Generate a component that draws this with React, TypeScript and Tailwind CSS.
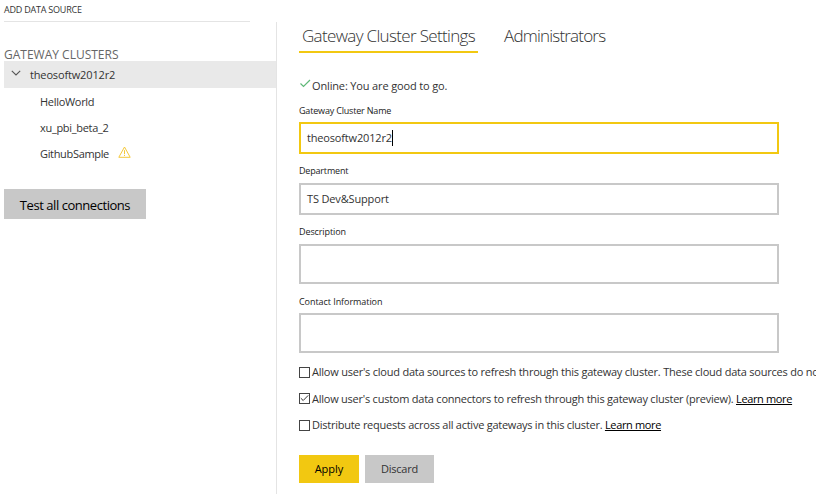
import React from "react";

function Checkbox({ checked = false }: { checked?: boolean }) {
  return (
    <span className="mr-[2px] flex h-[11px] w-[11px] shrink-0 items-center justify-center border border-[#444] bg-white">
      {checked && (
        <svg width="9" height="8" viewBox="0 0 9 8" fill="none" stroke="#333" strokeWidth="1">
          <path d="M0.8 4.2 L3.2 6.5 L8.2 1.4" />
        </svg>
      )}
    </span>
  );
}

function Label({ className, children }: { className: string; children: React.ReactNode }) {
  return (
    <div className="flex h-3 items-center text-[9px] text-[#222]">
      <span className={className}>{children}</span>
    </div>
  );
}

export default function App() {
  return (
    <div className="flex h-[494px] w-[816px] overflow-hidden bg-white font-['Open_Sans','Noto_Sans',sans-serif] text-[11px] whitespace-nowrap text-[#333]">
      <aside className="flex w-[276px] shrink-0 flex-col pl-1">
        <div className="flex h-[21px] w-[246px] items-center pb-px text-[9px]">
          <span className="tracking-[-0.22px]">ADD DATA SOURCE</span>
        </div>
        <div className="h-px w-[246px] bg-[#e4e4e4]" />
        <div className="mt-6 flex h-[15px] items-center pt-[2px] text-[12px] text-[#666]">
          <span>GATEWAY CLUSTERS</span>
        </div>
        <div className="flex h-[27px] items-center bg-[#e9e9e9] pl-[7px]">
          <svg className="mr-[9px] -mt-[3px]" width="10" height="6" viewBox="0 0 10 6" fill="none" stroke="#555" strokeWidth="1.1">
            <path d="M0.8 0.8 L5 5 L9.2 0.8" />
          </svg>
          <span className="pt-px tracking-[-0.15px]">theosoftw2012r2</span>
        </div>
        <div className="flex h-[26px] items-center pt-[2px] pl-9"><span className="tracking-[-0.3px]">HelloWorld</span></div>
        <div className="flex h-[27px] items-center pt-px pl-9"><span className="tracking-[-0.3px]">xu_pbi_beta_2</span></div>
        <div className="flex h-[26px] items-center pt-px pl-9">
          <span className="w-[78px] tracking-[-0.33px]">GithubSample</span>
          <svg className="-mt-[5px]" width="13" height="12" viewBox="0 0 13 12" fill="none" stroke="#f4c83c" strokeWidth="1">
            <path d="M6.5 1 L12.2 11.3 H0.8 Z M6.5 4.2 V8.2 M6.5 9 V10" />
          </svg>
        </div>
        <button className="mt-[22px] flex h-[30px] w-[142px] items-center justify-center bg-[#c8c8c8] pt-[3px] text-[13px] text-black">
          <span className="tracking-[-0.45px]">Test all connections</span>
        </button>
      </aside>

      <main className="mt-[22px] flex w-[540px] flex-col border-l border-[#e4e4e4] pl-[22px]">
        <nav className="flex h-[31px] text-[17px] font-light text-[#333]">
          <div className="flex w-[179px] justify-center border-b-2 border-[#f2c811]">
            <span className="leading-[27px] tracking-[-0.66px]">Gateway Cluster Settings</span>
          </div>
          <div className="ml-[26px]">
            <span className="leading-[27px] tracking-[-0.8px]">Administrators</span>
          </div>
        </nav>
        <div className="mt-[25px] flex h-4 items-center">
          <svg className="mr-px -mt-[5px]" width="12" height="9" viewBox="0 0 12 9" fill="none" stroke="#5fb878" strokeWidth="1.2">
            <path d="M1.5 4.5 L4.5 7.5 L11 1" />
          </svg>
          <span className="tracking-[-0.15px]">Online: You are good to go.</span>
        </div>
        <div className="mt-[10px] pt-px"><Label className="tracking-[-0.18px]">Gateway Cluster Name</Label></div>
        <div className="mt-[5px] flex h-8 w-[480px] items-center border-2 border-[#f2c811] pl-1.5">
          <span className="tracking-[-0.17px]">theosoftw2012r2</span>
          <span className="h-4 w-px bg-black" />
        </div>
        <div className="mt-[11px]"><Label className="tracking-[-0.18px]">Department</Label></div>
        <div className="mt-1.5 flex h-8 w-[480px] items-center border-2 border-[#c8c8c8] pl-1.5">
          <span className="tracking-[-0.15px]">TS Dev&amp;Support</span>
        </div>
        <div className="mt-[11px]"><Label className="tracking-[-0.1px]">Description</Label></div>
        <div className="mt-1.5 h-10 w-[480px] border-2 border-[#c8c8c8]" />
        <div className="mt-[12px]"><Label className="tracking-[-0.06px]">Contact Information</Label></div>
        <div className="mt-[5px] h-10 w-[480px] border-2 border-[#c8c8c8]" />
        <div className="mt-[11px] flex h-4 items-center">
          <Checkbox />
          <span className="pt-px tracking-[-0.225px]">Allow user's cloud data sources to refresh through this gateway cluster. These cloud data sources do no</span>
        </div>
        <div className="mt-[10px] flex h-4 items-center">
          <Checkbox checked />
          <span className="pt-[2px] tracking-[-0.235px]">Allow user's custom data connectors to refresh through this gateway cluster (preview). <a className="tracking-[-0.35px] text-black underline">Learn more</a></span>
        </div>
        <div className="mt-[11px] flex h-4 items-center">
          <Checkbox />
          <span className="tracking-[-0.25px]">Distribute requests across all active gateways in this cluster. <a className="tracking-[-0.35px] text-black underline">Learn more</a></span>
        </div>
        <div className="mt-[22px] flex gap-1.5">
          <button className="h-7 w-[60px] bg-[#f2c811] text-black"><span>Apply</span></button>
          <button className="h-7 w-[69px] bg-[#c8c8c8] text-[#333]"><span className="tracking-[-0.25px]">Discard</span></button>
        </div>
      </main>
    </div>
  );
}
